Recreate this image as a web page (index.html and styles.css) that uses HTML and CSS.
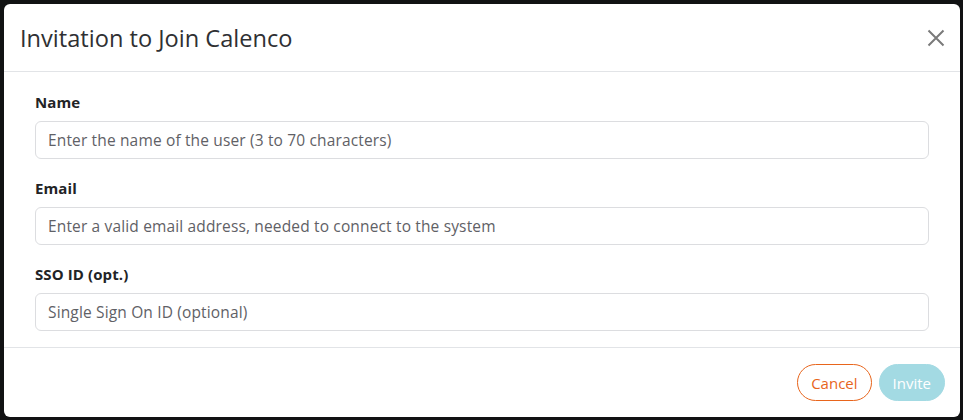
FILE: index.html
```html
<!DOCTYPE html>
<html lang="en">
<head>
<meta charset="utf-8">
<title>Invitation to Join Calenco</title>
<link rel="stylesheet" href="styles.css">
</head>
<body>
<div class="backdrop">
  <div class="modal">
    <div class="modal-header">
      <h5 class="modal-title">Invitation to Join Calenco</h5>
      <button class="close" type="button" aria-label="Close">
        <svg width="18" height="18" viewBox="0 0 18 18"><path d="M1.5 1.5 L16.5 16.5 M16.5 1.5 L1.5 16.5" stroke="#7a7a7a" stroke-width="2" fill="none"/></svg>
      </button>
    </div>
    <div class="modal-body">
      <div class="group">
        <label class="label">Name</label>
        <input class="input" type="text" placeholder="Enter the name of the user (3 to 70 characters)">
      </div>
      <div class="group">
        <label class="label">Email</label>
        <input class="input" type="text" placeholder="Enter a valid email address, needed to connect to the system">
      </div>
      <div class="group">
        <label class="label">SSO ID (opt.)</label>
        <input class="input" type="text" placeholder="Single Sign On ID (optional)">
      </div>
    </div>
    <div class="modal-footer">
      <button class="btn btn-cancel" type="button">Cancel</button>
      <button class="btn btn-invite" type="button">Invite</button>
    </div>
  </div>
</div>
</body>
</html>
```
FILE: styles.css
```css
html, body {
  margin: 0;
  padding: 0;
  background: #111213;
  font-family: "Open Sans", "Noto Sans", sans-serif;
}
.backdrop {
  width: 963px;
  height: 420px;
  padding: 4px 3px 3px 4px;
  box-sizing: border-box;
}
.modal {
  background: #fff;
  border-radius: 6px;
  height: 413px;
  display: flex;
  flex-direction: column;
}
.modal-header {
  display: flex;
  align-items: center;
  justify-content: space-between;
  padding: 16px 16px 16px 16px;
  height: 68px;
  box-sizing: border-box;
  border-bottom: 1px solid #e2e4e7;
}
.modal-title {
  margin: 0;
  font-size: 23.6px;
  font-weight: 400;
  color: #2f3033;
  line-height: 36px;
}
.close {
  background: none;
  border: 0;
  padding: 0;
  width: 18px;
  height: 18px;
  margin-right: -1px;
  display: flex;
}
.modal-body {
  padding: 19px 31px 16px 31px;
  border-bottom: 1px solid #e2e4e7;
  display: flex;
  flex-direction: column;
  gap: 18px;
}
.group {
  display: flex;
  flex-direction: column;
}
.label {
  font-size: 15px;
  font-weight: 700;
  color: #222326;
  line-height: 22px;
  margin-bottom: 8px;
  letter-spacing: 0.1px;
}
.input {
  height: 38px;
  box-sizing: border-box;
  border: 1px solid #dcdde0;
  border-radius: 6px;
  padding: 0 12px;
  font-family: inherit;
  font-size: 15.5px;
  letter-spacing: 0.15px;
  color: #333;
  outline: none;
}
.input::placeholder {
  color: #5f6166;
}
.modal-footer {
  flex: 1;
  display: flex;
  align-items: center;
  justify-content: flex-end;
  gap: 7px;
  padding: 0 15px 0 15px;
}
.btn {
  height: 37px;
  border-radius: 19px;
  font-family: inherit;
  font-size: 15px;
  padding: 0 13px;
  box-sizing: border-box;
}
.btn-cancel {
  background: #fff;
  color: #e8651c;
  border: 1px solid #e8651c;
}
.btn-invite {
  background: #a3dae3;
  color: #fff;
  border: 1px solid #a3dae3;
}
```
